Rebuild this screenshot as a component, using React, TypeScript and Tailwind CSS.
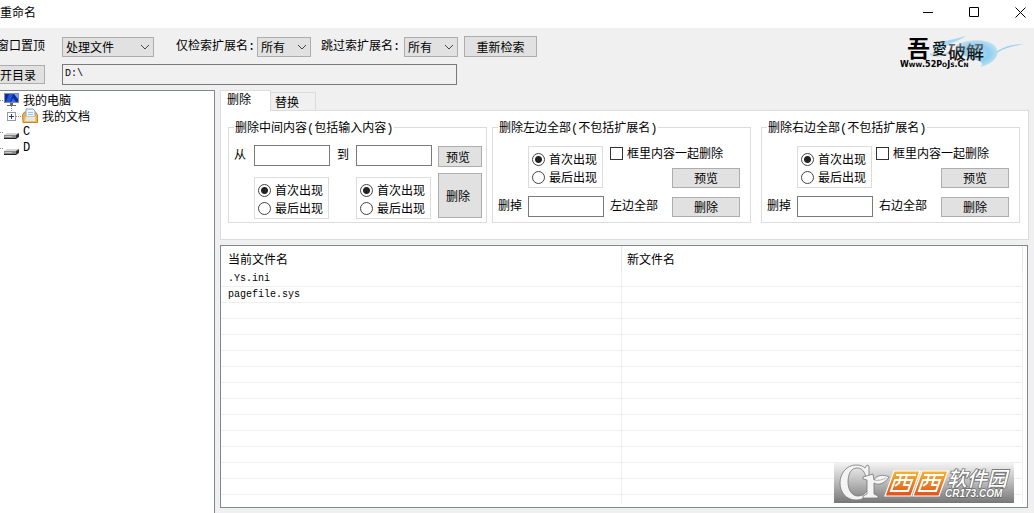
import { useState, type ReactNode } from "react";

function Chevron() {
  return (
    <svg className="pointer-events-none absolute top-1/2 right-1 -translate-y-1/2" width="10" height="6" viewBox="0 0 10 6" fill="none" stroke="#444" aria-hidden="true">
      <path d="M1 1 L5 5 L9 1" />
    </svg>
  );
}

function Mono({ children }: { children: ReactNode }) {
  return <span className="font-['Liberation_Mono',monospace] leading-none">{children}</span>;
}

function Dropdown({ options, label, id, className }: { options: string[]; label: string; id: string; className: string }) {
  return (
    <div className={`relative h-5 shrink-0 self-end ${className}`}>
      <select id={id} aria-label={label} className="block h-full w-full appearance-none border border-[#adadad] bg-[#e1e1e1] pl-[3px] leading-[18px]">
        {options.map((o) => (
          <option key={o}>{o}</option>
        ))}
      </select>
      <Chevron />
    </div>
  );
}

function PushButton({ children, className }: { children: ReactNode; className: string }) {
  return (
    <button type="button" className={`flex shrink-0 items-center justify-center border border-[#adadad] bg-[#e1e1e1] leading-4 ${className}`}>
      {children}
    </button>
  );
}

function TextBox({ id }: { id: string }) {
  return <input id={id} type="text" className="h-[21px] w-[76px] border border-[#7a7a7a] bg-white px-1" />;
}

function Occurrence({ name }: { name: string }) {
  return (
    <div role="radiogroup" aria-label="出现位置" className="h-[42px] w-[75px] border border-[#dcdcdc] pt-[3px] pl-[3px]">
      {["首次出现", "最后出现"].map((text, i) => (
        <label key={text} className="flex h-[18px] items-center gap-1">
          <input
            type="radio"
            name={name}
            defaultChecked={i === 0}
            className="size-[13px] shrink-0 appearance-none rounded-full border border-[#444] bg-white checked:bg-[radial-gradient(circle,#222_0,#222_3px,#fff_4px)]"
          />
          {text}
        </label>
      ))}
    </div>
  );
}

function Group({ title, note, children }: { title: string; note: string; children: ReactNode }) {
  return (
    <fieldset className="min-w-0 flex-1 border border-[#dcdcdc] pb-[3px] pl-[5px]">
      <legend className="h-4 px-px leading-4 whitespace-nowrap">
        {title}
        <Mono>(</Mono>
        {note}
        <Mono>)</Mono>
      </legend>
      {children}
    </fieldset>
  );
}

function SideGroup({ side, id, topColumns }: { side: string; id: string; topColumns: string }) {
  return (
    <Group title={`删除${side}边全部`} note="不包括扩展名">
      <div className={`grid pt-[11px] ${topColumns}`}>
        <div className="col-start-2">
          <Occurrence name={`${id}-pos`} />
        </div>
        <div className="col-span-2 flex flex-col justify-between">
          <label className="flex items-center gap-1 leading-[14px] whitespace-nowrap">
            <input type="checkbox" className="size-[13px] shrink-0 appearance-none border border-[#333] bg-white checked:bg-[#333]" />
            框里内容一起删除
          </label>
          <PushButton className="h-5 w-[68px] self-end">预览</PushButton>
        </div>
      </div>
      <div className="grid grid-cols-[30px_82px_62px_68px] pt-2">
        <label htmlFor={`${id}-text`} className="leading-[18px]">
          删掉
        </label>
        <TextBox id={`${id}-text`} />
        <span className="leading-[18px]">{side}边全部</span>
        <PushButton className="h-5 w-[68px] self-end">删除</PushButton>
      </div>
    </Group>
  );
}

function SiteLogo() {
  return (
    <svg width="126" height="38" viewBox="0 0 126 38" role="img" aria-label="吾愛破解" className="shrink-0">
      <defs>
        <radialGradient id="splash">
          <stop offset="0" stopColor="#b4def3" />
          <stop offset="0.6" stopColor="#8fcdef" />
          <stop offset="1" stopColor="#b9dff2" />
        </radialGradient>
        <linearGradient id="ink" x1="0" x2="0" y1="0" y2="1">
          <stop offset="0.1" stopColor="#8a949a" />
          <stop offset="0.6" stopColor="#111" />
        </linearGradient>
      </defs>
      <path d="M33 15 C41 8 50 9 66 4 C58 10 50 10 43 16 C38 19 32 19 33 15Z" fill="#a5d8f1" />
      <path d="M56 14 C64 7 86 6 94 13 C102 21 96 31 80 35 C84 32 82 30 76 28 C66 25 58 22 56 14Z" fill="url(#splash)" />
      <path d="M96 20 C103 15 112 12 125 12 C114 14 104 16 97 21Z" fill="#9bd3f0" />
      <path d="M30 22 C36 25 44 24 50 20" stroke="#b9dff2" strokeWidth="2" fill="none" />
      <text x="7" y="25" fontFamily="'Noto Sans CJK SC', sans-serif" fontSize="23" fontWeight="700">吾</text>
      <text x="32" y="22" fontFamily="'Noto Sans CJK TC', sans-serif" fontSize="15" fontWeight="500" fill="#111">愛</text>
      <text x="48" y="27" fontFamily="'Noto Sans CJK SC', sans-serif" fontSize="18" fontWeight="500" fill="url(#ink)">破解</text>
      <text x="0" y="35" fontFamily="'DejaVu Sans', sans-serif" fontSize="8" fontWeight="700" fontVariant="small-caps">
        Www.52PoJs.Cn
      </text>
    </svg>
  );
}

function Watermark() {
  return (
    <svg width="180" height="40" viewBox="0 0 180 40" role="img" aria-label="西西软件园 CR173.COM" className="absolute right-[13px] bottom-1">
      <defs>
        <linearGradient id="veil" x1="0" x2="0" y1="0" y2="1">
          <stop offset="0" stopColor="#f3f3f3" />
          <stop offset="0.5" stopColor="#b9b9b9" />
          <stop offset="1" stopColor="#777" />
        </linearGradient>
        <linearGradient id="amber" x1="0" x2="0" y1="0" y2="1">
          <stop offset="0" stopColor="#f8b62c" />
          <stop offset="1" stopColor="#df501f" />
        </linearGradient>
      </defs>
      <rect width="180" height="40" fill="url(#veil)" />
      <g stroke="#777" strokeWidth="0.8" fill="#f4f4f4">
        <path d="M35 3 L35 14 L32 14 C30 7 27 5 23 5 C17 5 14 11 14 19 C14 27 18 33 24 33 C28 33 31 31 33 28 L35 31 C31 35 27 37 22 37 C12 37 6 29 6 20 C6 10 13 2 22 2 C26 2 29 3 31 5 L33 2Z" />
        <path d="M29 14 L39 11 L40 17 C43 12 49 11 55 14 C51 20 45 23 40 20 L40 31 L44 33 L44 35 L29 35 L29 33 L33 31 L33 17 L29 16Z" />
      </g>
      <path d="M40 17 C44 18 48 17 52 15" stroke="#999" strokeWidth="0.7" fill="none" />
      <path d="M60 8 H86 L77 33 H51Z" fill="url(#amber)" stroke="#fff" strokeWidth="1.2" />
      <path d="M88 8 H114 L105 33 H79Z" fill="url(#amber)" stroke="#fff" strokeWidth="1.2" />
      <g stroke="#fff" strokeWidth="2" fill="none">
        <path d="M62 12 H82 M61 17 H78 L74 28 H57Z M67 12 L65 20 L61 23 M73 12 L70 22 H75" />
        <path d="M90 12 H110 M89 17 H106 L102 28 H85Z M95 12 L93 20 L89 23 M101 12 L98 22 H103" />
      </g>
      <g fill="#fff" stroke="#666" strokeWidth="1.4" paintOrder="stroke" fontStyle="italic">
        <text x="113" y="23" fontFamily="'Noto Sans CJK SC', sans-serif" fontSize="20" fontWeight="500">软件园</text>
        <text x="111" y="34" fontFamily="'Liberation Sans', sans-serif" fontSize="10" fontWeight="700">CR173.COM</text>
      </g>
    </svg>
  );
}

function ComputerIcon() {
  return (
    <svg width="20" height="16" viewBox="0 0 20 16" aria-hidden="true">
      <path d="M0 8.500h4 M11.500 14v2" stroke="#888" strokeDasharray="1 1" />
      <rect x="4.500" y="1.500" width="14" height="9" fill="#0b2d9e" stroke="#8a8f96" />
      <path d="M9 2h4l-3 8h-4z" fill="#1f55e0" />
      <path d="M14 2h4v5z" fill="#6fa5ff" />
      <path d="M13 6l3 4h-5z" fill="#2f6cf0" />
      <path d="M10 11h3v2h-3zM7 13h9v1H7z" fill="#666" />
    </svg>
  );
}

function FolderIcon() {
  return (
    <svg width="39" height="16" viewBox="0 0 39 16" aria-hidden="true">
      <path d="M11.500 0v4 M16 8.500h6" stroke="#888" strokeDasharray="1 1" />
      <rect x="7.500" y="4.500" width="8" height="8" fill="#fff" stroke="#999" />
      <path d="M9 8.500h5M11.500 6v5" stroke="#1b3f9b" />
      <path d="M22.500 7 L24.500 4 H35.500 L37.500 7 V14.500 H23Z" fill="#f0b34a" stroke="#c98324" />
      <path d="M26 1h7l2 2v7h-9z" fill="#eef7ff" stroke="#7ba7cc" />
      <path d="M28 4.500h5M28 6.500h5" stroke="#9bc4e4" />
      <path d="M25.500 8.500 H35.500 V13.500 H24.500Z" fill="#d6eaf7" stroke="#f3c264" />
    </svg>
  );
}

function DriveIcon() {
  return (
    <svg width="20" height="16" viewBox="0 0 20 16" aria-hidden="true">
      <path d="M0 8.500h4" stroke="#888" strokeDasharray="1 1" />
      <path d="M7 9h12l-3 2H4z" fill="#d5d5d5" />
      <path d="M4 11h12v3H4z" fill="#888" />
      <path d="M16 11l3-2v4l-3 2z" fill="#333" />
      <path d="M4 14.500h12" stroke="#222" />
      <path d="M5 12.500h7" stroke="#c4c4c4" />
    </svg>
  );
}

const files = [".Ys.ini", "pagefile.sys", ...Array<string>(12).fill("")];

export default function App() {
  const [tab, setTab] = useState("删除");
  return (
    <div className="flex min-h-screen flex-col overflow-hidden bg-[#f0f0f0] font-['Noto_Sans_CJK_SC',sans-serif] text-[12px] leading-4 text-black">
      <header className="flex h-7 items-center justify-between bg-white">
        <h1 className="pb-1">重命名</h1>
        <div className="flex h-full items-start">
          <button type="button" aria-label="最小化" className="flex h-6 w-[46px] items-center justify-center">
            <svg width="11" height="11" stroke="#000"><path d="M0 5.500h10" /></svg>
          </button>
          <button type="button" aria-label="最大化" className="flex h-6 w-[46px] items-center justify-center">
            <svg width="11" height="11" stroke="#000" fill="none"><path d="M.5 .5h9v9h-9z" /></svg>
          </button>
          <button type="button" aria-label="关闭" className="flex h-6 w-[37px] items-center justify-center pl-[9px]">
            <svg width="11" height="11" stroke="#000"><path d="M.5 .5l10 10M10.500 .5l-10 10" /></svg>
          </button>
        </div>
      </header>

      <div className="flex h-[62px] justify-between pr-2">
        <div className="flex flex-col gap-[7px] pt-2 whitespace-nowrap">
          <div className="flex h-[21px] items-start leading-[18px]">
            <label htmlFor="action" className="-ml-[3px] w-[65px]">窗口置顶</label>
            <Dropdown id="action" label="窗口置顶" options={["处理文件", "处理目录"]} className="mr-[22px] w-[92px]" />
            <label htmlFor="only" className="w-[81px]">仅检索扩展名<Mono>:</Mono></label>
            <Dropdown id="only" label="仅检索扩展名" options={["所有"]} className="mr-[10px] w-[54px]" />
            <label htmlFor="skip" className="w-[83px]">跳过索扩展名<Mono>:</Mono></label>
            <Dropdown id="skip" label="跳过索扩展名" options={["所有"]} className="mr-[6px] w-[54px]" />
            <PushButton className="h-[21px] w-[73px]">重新检索</PushButton>
          </div>
          <div className="flex items-center gap-[17px]">
            <button type="button" className="flex h-[19px] w-[45px] items-center justify-end border border-l-0 border-[#adadad] bg-[#e1e1e1] pr-2 leading-4">开目录</button>
            <input aria-label="目录" readOnly defaultValue="D:\" className="h-[21px] w-[395px] border border-[#7a7a7a] bg-[#f0f0f0] px-[2px] pb-[2px] font-['Liberation_Mono',monospace] text-[10px]" />
          </div>
        </div>
        <div className="pt-1">
          <SiteLogo />
        </div>
      </div>

      <main className="flex flex-1 gap-[5px]">
        <nav aria-label="目录树" className="w-[215px] shrink-0 border-t border-r border-[#828790] bg-white pt-px">
          <ul>
            <li className="flex h-4 items-center gap-[3px]"><ComputerIcon />我的电脑</li>
            <li className="flex h-4 items-center gap-[3px]"><FolderIcon />我的文档</li>
            <li className="flex h-4 items-center gap-[3px]"><DriveIcon /><Mono>C</Mono></li>
            <li className="flex h-4 items-center gap-[3px]"><DriveIcon /><Mono>D</Mono></li>
          </ul>
        </nav>

        <div className="flex min-w-0 flex-1 flex-col gap-[5px] pr-[5px] pb-[5px]">
          <section>
            <div role="tablist" className="flex h-5 items-end">
              {["删除", "替换"].map((t) => (
                <button
                  key={t}
                  type="button"
                  role="tab"
                  aria-selected={tab === t}
                  onClick={() => setTab(t)}
                  className={
                    tab === t
                      ? "-mb-px flex h-[21px] w-[51px] items-center border border-b-0 border-[#dcdcdc] bg-white pb-1 pl-[6px]"
                      : "flex h-[18px] w-[45px] items-center border border-b-0 border-l-0 border-[#dcdcdc] bg-[#f0f0f0] pl-1"
                  }
                >
                  {t}
                </button>
              ))}
            </div>
            <div role="tabpanel" className="flex border border-[#dcdcdc] bg-white pt-2 pr-2 pb-4 pl-[7px]">
              <Group title="删除中间内容" note="包括输入内容">
                <div className="flex gap-[6px] pt-[10px]">
                  <div className="grid grid-cols-[20px_76px_26px_76px] gap-y-[11px]">
                    <label htmlFor="from" className="leading-[18px]">从</label>
                    <TextBox id="from" />
                    <label htmlFor="to" className="pl-[7px] leading-[18px]">到</label>
                    <TextBox id="to" />
                    <div className="col-start-2"><Occurrence name="from-pos" /></div>
                    <div className="col-start-4"><Occurrence name="to-pos" /></div>
                  </div>
                  <div className="flex flex-col gap-[6px] pt-px">
                    <PushButton className="h-[21px] w-11 pr-1">预览</PushButton>
                    <PushButton className="h-[45px] w-11 pr-1">删除</PushButton>
                  </div>
                </div>
              </Group>
              <div className="w-[5px]" />
              <SideGroup side="左" id="left" topColumns="grid-cols-[30px_82px_62px_68px]" />
              <div className="w-[10px]" />
              <SideGroup side="右" id="right" topColumns="grid-cols-[30px_79px_65px_68px]" />
            </div>
          </section>

          <section className="relative mr-px flex flex-1 flex-col border border-[#828790] bg-white pr-1">
            <table className="w-full table-fixed border-separate border-spacing-0 text-left">
              <thead>
                <tr className="h-[25px]">
                  <th className="w-1/2 border-r border-[#e5e5e5] p-0 pl-[7px] font-normal">当前文件名</th>
                  <th className="border-r border-[#e5e5e5] p-0 pl-[5px] font-normal">新文件名</th>
                </tr>
              </thead>
              <tbody className="font-['Liberation_Mono',monospace] text-[10px] leading-[15px]">
                {files.map((f, i) => (
                  <tr key={i} className="h-4">
                    <td className="h-4 border-r border-b border-[#efefef] p-0 pl-[7px]">{f}</td>
                    <td className="h-4 border-r border-b border-[#efefef] p-0" />
                  </tr>
                ))}
              </tbody>
            </table>
            <div className="mb-[3px] grid flex-1 grid-cols-2" aria-hidden="true">
              <div className="border-r border-[#efefef]" />
              <div className="border-r border-[#efefef]" />
            </div>
            <Watermark />
          </section>
        </div>
      </main>
    </div>
  );
}
